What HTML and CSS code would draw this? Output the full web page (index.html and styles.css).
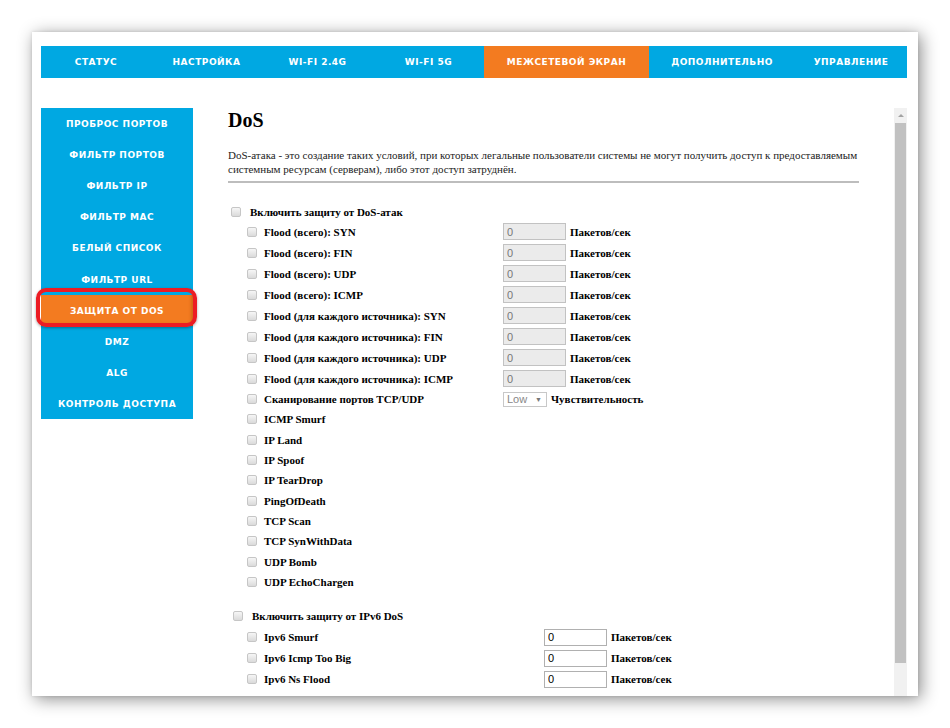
FILE: index.html
```html
<!DOCTYPE html>
<html lang="ru">
<head>
<meta charset="UTF-8">
<title>DoS</title>
<link rel="stylesheet" href="styles.css">
</head>
<body>

<div class="window">
    <ul class="topnav">
        <li class="t1">Статус</li>
        <li class="t2">Настройка</li>
        <li class="t3">Wi-Fi 2.4G</li>
        <li class="t4">Wi-Fi 5G</li>
        <li class="t5 active">Межсетевой экран</li>
        <li class="t6">Дополнительно</li>
        <li class="t7">Управление</li>
    </ul>

    <div class="main">
        <ul class="sidenav">
            <li>Проброс портов</li>
            <li>Фильтр портов</li>
            <li>Фильтр IP</li>
            <li>Фильтр MAC</li>
            <li>Белый список</li>
            <li>Фильтр URL</li>
            <li class="active">Защита от DOS</li>
            <li>DMZ</li>
            <li>ALG</li>
            <li>Контроль доступа</li>
        </ul>

        <div class="frame">
            <div class="content">
                <h2>DoS</h2>
                <p class="desc">DoS-атака - это создание таких условий, при которых легальные пользователи системы не могут получить доступ к предоставляемым системным ресурсам (серверам), либо этот доступ затруднён.</p>
                <div class="rule"></div>

                <div class="row head first">
                    <input type="checkbox" class="cb">
                    <span class="lbl">Включить защиту от DoS-атак</span>
                </div>
                <div class="row sub">
                    <input type="checkbox" class="cb">
                    <span class="lbl">Flood (всего): SYN</span>
                    <input type="text" class="num off" value="0">
                    <span class="unit">Пакетов/сек</span>
                </div>
                <div class="row sub">
                    <input type="checkbox" class="cb">
                    <span class="lbl">Flood (всего): FIN</span>
                    <input type="text" class="num off" value="0">
                    <span class="unit">Пакетов/сек</span>
                </div>
                <div class="row sub">
                    <input type="checkbox" class="cb">
                    <span class="lbl">Flood (всего): UDP</span>
                    <input type="text" class="num off" value="0">
                    <span class="unit">Пакетов/сек</span>
                </div>
                <div class="row sub">
                    <input type="checkbox" class="cb">
                    <span class="lbl">Flood (всего): ICMP</span>
                    <input type="text" class="num off" value="0">
                    <span class="unit">Пакетов/сек</span>
                </div>
                <div class="row sub">
                    <input type="checkbox" class="cb">
                    <span class="lbl">Flood (для каждого источника): SYN</span>
                    <input type="text" class="num off" value="0">
                    <span class="unit">Пакетов/сек</span>
                </div>
                <div class="row sub">
                    <input type="checkbox" class="cb">
                    <span class="lbl">Flood (для каждого источника): FIN</span>
                    <input type="text" class="num off" value="0">
                    <span class="unit">Пакетов/сек</span>
                </div>
                <div class="row sub">
                    <input type="checkbox" class="cb">
                    <span class="lbl">Flood (для каждого источника): UDP</span>
                    <input type="text" class="num off" value="0">
                    <span class="unit">Пакетов/сек</span>
                </div>
                <div class="row sub">
                    <input type="checkbox" class="cb">
                    <span class="lbl">Flood (для каждого источника): ICMP</span>
                    <input type="text" class="num off" value="0">
                    <span class="unit">Пакетов/сек</span>
                </div>
                <div class="row sub plain">
                    <input type="checkbox" class="cb">
                    <span class="lbl">Сканирование портов TCP/UDP</span>
                    <span class="select">Low<span class="arrow">▼</span></span>
                    <span class="unit">Чувствительность</span>
                </div>
                <div class="row sub plain"><input type="checkbox" class="cb"><span class="lbl">ICMP Smurf</span></div>
                <div class="row sub plain"><input type="checkbox" class="cb"><span class="lbl">IP Land</span></div>
                <div class="row sub plain"><input type="checkbox" class="cb"><span class="lbl">IP Spoof</span></div>
                <div class="row sub plain"><input type="checkbox" class="cb"><span class="lbl">IP TearDrop</span></div>
                <div class="row sub plain"><input type="checkbox" class="cb"><span class="lbl">PingOfDeath</span></div>
                <div class="row sub plain"><input type="checkbox" class="cb"><span class="lbl">TCP Scan</span></div>
                <div class="row sub plain"><input type="checkbox" class="cb"><span class="lbl">TCP SynWithData</span></div>
                <div class="row sub plain"><input type="checkbox" class="cb"><span class="lbl">UDP Bomb</span></div>
                <div class="row sub plain"><input type="checkbox" class="cb"><span class="lbl">UDP EchoChargen</span></div>

                <div class="row head v6">
                    <input type="checkbox" class="cb">
                    <span class="lbl">Включить защиту от IPv6 DoS</span>
                </div>
                <div class="row sub wide">
                    <input type="checkbox" class="cb">
                    <span class="lbl">Ipv6 Smurf</span>
                    <input type="text" class="num" value="0">
                    <span class="unit">Пакетов/сек</span>
                </div>
                <div class="row sub wide">
                    <input type="checkbox" class="cb">
                    <span class="lbl">Ipv6 Icmp Too Big</span>
                    <input type="text" class="num" value="0">
                    <span class="unit">Пакетов/сек</span>
                </div>
                <div class="row sub wide">
                    <input type="checkbox" class="cb">
                    <span class="lbl">Ipv6 Ns Flood</span>
                    <input type="text" class="num" value="0">
                    <span class="unit">Пакетов/сек</span>
                </div>
            </div>

            <!-- scrollbar of the content frame -->
            <div class="scrollbar">
                <div class="sb-up"></div>
                <div class="sb-thumb"></div>
            </div>
        </div>
    </div>
</div>

</body>
</html>
```

FILE: styles.css
```css
body {
    margin: 0;
    padding: 32px;
    background-color: #ffffff;
}

.window {
    width: 886px;
    height: 664px;
    background-color: #ffffff;
    overflow: hidden;
    box-shadow: 3px 3px 16px rgba(0, 0, 0, 0.45), 0 0 3px rgba(0, 0, 0, 0.12);
}

/* top menu */
.topnav {
    display: flex;
    list-style: none;
    margin: 14px 11px 0 9px;
    padding: 0;
    height: 32px;
    background-color: #00a8e2;
}

.topnav li,
.sidenav li {
    display: flex;
    align-items: center;
    justify-content: center;
    color: #ffffff;
    font-family: "DejaVu Sans", sans-serif;
    font-weight: bold;
    font-size: 9px;
    letter-spacing: 0.5px;
    text-transform: uppercase;
    white-space: nowrap;
}

.topnav .t1 { width: 110px; }
.topnav .t2 { width: 111px; }
.topnav .t3 { width: 111px; }
.topnav .t4 { width: 111px; }
.topnav .t5 { width: 165px; }
.topnav .t6 { width: 146px; }
.topnav .t7 { flex: 1; }

.topnav .active {
    background-color: #f37b20;
}

.main {
    display: flex;
    margin-top: 30px;
    margin-right: 11px;
    height: 588px;
}

/* left menu */
.sidenav {
    list-style: none;
    margin: 0 0 0 9px;
    padding: 0 0 0 0;
    width: 152px;
    align-self: flex-start;
    background-color: #00a8e2;
}

.sidenav li {
    height: 31.1px;
    padding-top: 1px;
    box-sizing: border-box;
}

.sidenav .active {
    position: relative;
    background-color: #f37b20;
    box-shadow: inset -2px -2px 3px rgba(150, 60, 0, 0.35);
}

/* red highlight drawn over the active item */
.sidenav .active::after {
    content: "";
    position: absolute;
    left: -5px;
    right: -4px;
    top: -7px;
    bottom: -1px;
    border: 4px solid #ec1c24;
    border-radius: 10px;
    box-shadow: 0 1px 3px rgba(0, 0, 0, 0.35);
}

/* content frame */
.frame {
    flex: 1;
    display: flex;
    margin-left: 10px;
}

.content {
    flex: 1;
    padding: 0 35px 0 25px;
    font-family: "Liberation Serif", "Times New Roman", serif;
    color: #000000;
}

h2 {
    margin: 0;
    font-size: 20px;
    line-height: 24px;
}

.desc {
    margin: 16px 0 0 0;
    font-family: "Liberation Serif", "Times New Roman", serif;
    font-size: 11px;
    line-height: 14px;
    color: #222222;
}

.rule {
    height: 2px;
    margin-top: 5px;
    background-color: #bdbdbd;
}

.row {
    display: flex;
    align-items: center;
    height: 21px;
    font-size: 11px;
    font-weight: bold;
}

.row.first {
    margin-top: 19px;
    height: 19px;
}

.row.plain {
    height: 20.3px;
}

.row.v6 {
    margin-top: 14px;
    height: 20.6px;
}

.cb {
    appearance: none;
    -webkit-appearance: none;
    box-sizing: border-box;
    width: 10px;
    height: 10px;
    margin: 0;
    border: 1px solid #c6c6c6;
    border-radius: 2px;
    background: linear-gradient(#f6f6f6, #dadada);
}

.row.head .cb {
    margin: 0 9px 0 3px;
}

.row.v6 .cb {
    margin-left: 5px;
}

.row.sub .cb {
    margin: 0 7px 0 19px;
}

.row.sub .lbl {
    width: 239px;
}

.row.wide .lbl {
    width: 280px;
}

.num {
    box-sizing: border-box;
    width: 63px;
    height: 17px;
    margin: 0;
    padding: 0 3px;
    border: 1px solid #b0b0b0;
    background-color: #ffffff;
    font-family: "Liberation Sans", sans-serif;
    font-size: 11px;
    color: #000000;
}

.num.off {
    background-color: #ebebeb;
    border-color: #c2c2c2;
    color: #777777;
}

.unit {
    margin-left: 4px;
}

.select {
    display: flex;
    align-items: center;
    justify-content: space-between;
    box-sizing: border-box;
    width: 44px;
    height: 15px;
    padding: 0 4px 0 3px;
    border: 1px solid #c8c8c8;
    background-color: #ffffff;
    font-family: "Liberation Sans", sans-serif;
    font-weight: normal;
    font-size: 11px;
    color: #888888;
}

.select .arrow {
    font-size: 7px;
    color: #777777;
}

/* scrollbar */
.scrollbar {
    display: flex;
    flex-direction: column;
    width: 13px;
    background-color: #f1f1f1;
}

.sb-up {
    height: 15px;
    display: flex;
    align-items: center;
    justify-content: center;
}

.sb-up::before {
    content: "";
    border-left: 3px solid transparent;
    border-right: 3px solid transparent;
    border-bottom: 3px solid #a3a3a3;
}

.sb-thumb {
    height: 540px;
    margin: 0 1px;
    background-color: #c1c1c1;
}
```
